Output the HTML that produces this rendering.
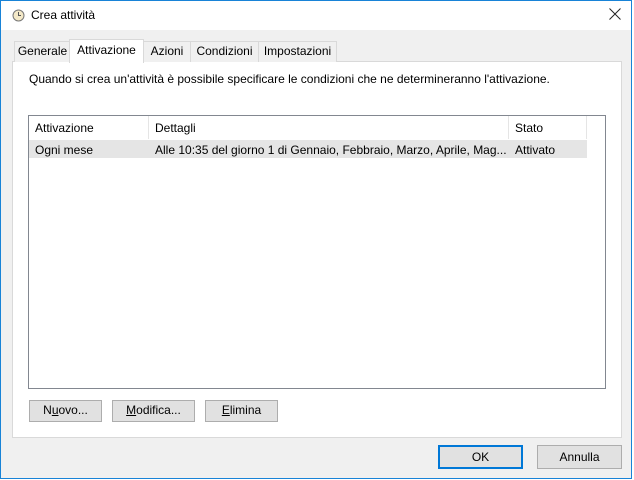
<html><head><style>
body{margin:0;width:634px;height:480px;background:#fff;font-family:"Liberation Sans",sans-serif;font-size:12px;color:#000;position:relative;overflow:hidden}
.a{position:absolute}
.win{left:0;top:0;width:630px;height:477px;border:1px solid #1883d7;background:#f0f0f0}
.title{left:1px;top:1px;width:630px;height:29px;background:#fff}
.tab{top:41px;height:20px;border:1px solid #d9d9d9;border-bottom:none;background:#f0f0f0;line-height:19px;text-align:center}
.btn{background:#e1e1e1;border:1px solid #adadad;text-align:center;line-height:19px;box-sizing:border-box}
</style></head><body>
<div class="a win"></div>
<div class="a title"></div>
<svg class="a" style="left:12px;top:9px" width="13" height="13" viewBox="0 0 13 13"><circle cx="6.5" cy="6.5" r="5.5" fill="#f4e9c8" stroke="#777"/><path d="M6.5 3v3.5h2.5" stroke="#555" fill="none"/></svg>
<div class="a" style="left:31px;top:8px">Crea attività</div>
<svg class="a" style="left:609px;top:8px" width="12" height="12" viewBox="0 0 12 12"><path d="M0.5 0.5L11.5 11.5M11.5 0.5L0.5 11.5" stroke="#222" stroke-width="1"/></svg>
<div class="a" style="left:12px;top:61px;width:608px;height:375px;background:#fff;border:1px solid #d9d9d9"></div>
<div class="a tab" style="left:14px;width:55px">Generale</div>
<div class="a tab" style="left:143px;width:46px">Azioni</div>
<div class="a tab" style="left:190px;width:67px">Condizioni</div>
<div class="a tab" style="left:258px;width:77px">Impostazioni</div>
<div class="a tab" style="left:69px;top:39px;width:73px;height:23px;background:#fff;line-height:20px">Attivazione</div>
<div class="a" style="left:29px;top:72px">Quando si crea un'attività è possibile specificare le condizioni che ne determineranno l'attivazione.</div>
<div class="a" style="left:28px;top:115px;width:576px;height:272px;border:1px solid #828790;background:#fff"></div>
<div class="a" style="left:148px;top:116px;width:1px;height:23px;background:#e5e5e5"></div>
<div class="a" style="left:508px;top:116px;width:1px;height:23px;background:#e5e5e5"></div>
<div class="a" style="left:586px;top:116px;width:1px;height:23px;background:#e5e5e5"></div>
<div class="a" style="left:35px;top:121px">Attivazione</div>
<div class="a" style="left:155px;top:121px">Dettagli</div>
<div class="a" style="left:515px;top:121px">Stato</div>
<div class="a" style="left:29px;top:140px;width:558px;height:18px;background:#e5e5e5"></div>
<div class="a" style="left:35px;top:143px">Ogni mese</div>
<div class="a" style="left:155px;top:143px">Alle 10:35 del giorno 1 di Gennaio, Febbraio, Marzo, Aprile, Mag...</div>
<div class="a" style="left:515px;top:143px">Attivato</div>
<div class="a btn" style="left:29px;top:400px;width:73px;height:22px">N<u>u</u>ovo...</div>
<div class="a btn" style="left:112px;top:400px;width:83px;height:22px"><u>M</u>odifica...</div>
<div class="a btn" style="left:205px;top:400px;width:73px;height:22px"><u>E</u>limina</div>
<div class="a btn" style="left:438px;top:445px;width:85px;height:24px;border:2px solid #0078d7;line-height:20px">OK</div>
<div class="a btn" style="left:537px;top:445px;width:85px;height:24px;line-height:22px">Annulla</div>
</body></html>
